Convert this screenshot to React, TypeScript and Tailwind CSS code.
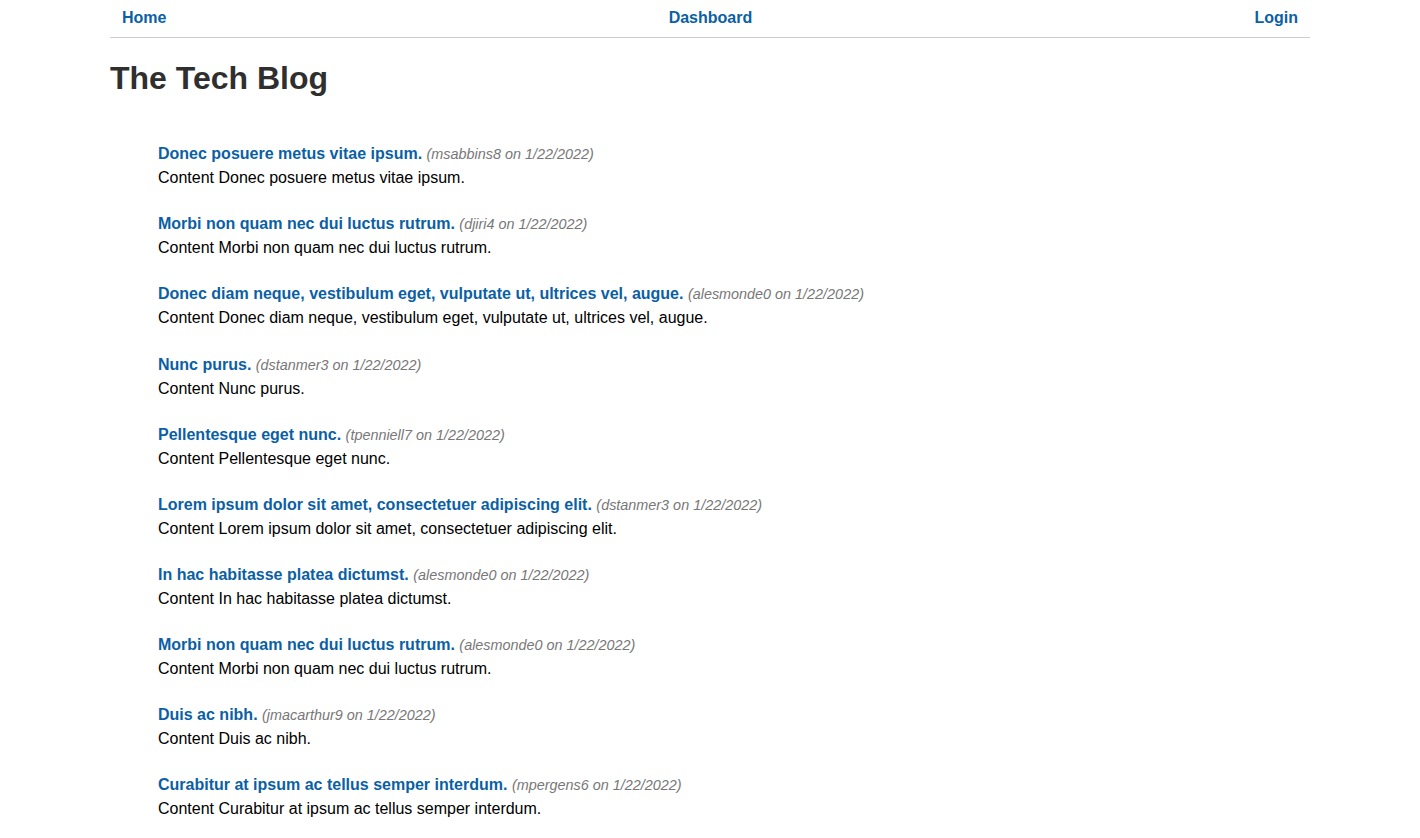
import React from "react";

const posts = [
  ["Donec posuere metus vitae ipsum.", "msabbins8"],
  ["Morbi non quam nec dui luctus rutrum.", "djiri4"],
  ["Donec diam neque, vestibulum eget, vulputate ut, ultrices vel, augue.", "alesmonde0"],
  ["Nunc purus.", "dstanmer3"],
  ["Pellentesque eget nunc.", "tpenniell7"],
  ["Lorem ipsum dolor sit amet, consectetuer adipiscing elit.", "dstanmer3"],
  ["In hac habitasse platea dictumst.", "alesmonde0"],
  ["Morbi non quam nec dui luctus rutrum.", "alesmonde0"],
  ["Duis ac nibh.", "jmacarthur9"],
  ["Curabitur at ipsum ac tellus semper interdum.", "mpergens6"],
];

export default function App() {
  return (
    <div
      className="min-h-[838px] bg-white text-black"
      style={{ fontFamily: '"Liberation Sans", Arial, sans-serif' }}
    >
      <div className="mx-auto w-[1200px]">
        <nav className="flex h-[38px] items-center justify-between border-b border-[#cccccc] px-3 pb-[1px]">
          <a className="text-base font-bold text-[#0b5fa5]" href="#">Home</a>
          <a className="text-base font-bold text-[#0b5fa5]" href="#">Dashboard</a>
          <a className="text-base font-bold text-[#0b5fa5]" href="#">Login</a>
        </nav>
        <h1 className="mt-[22px] text-[32px] font-bold leading-[37px] text-[#2f2f2f]">
          The Tech Blog
        </h1>
        <ul className="mt-[45.25px] pl-12">
          {posts.map(([title, user], i) => (
            <li key={i} className="mb-[22.1px]">
              <div className="leading-6">
                <a className="text-base font-bold text-[#0b5fa5]" href="#">{title}</a>{" "}
                <span className="text-[14.4px] italic text-[#777777]">({user} on 1/22/2022)</span>
              </div>
              <div className="text-base leading-6">Content {title}</div>
            </li>
          ))}
        </ul>
      </div>
    </div>
  );
}
